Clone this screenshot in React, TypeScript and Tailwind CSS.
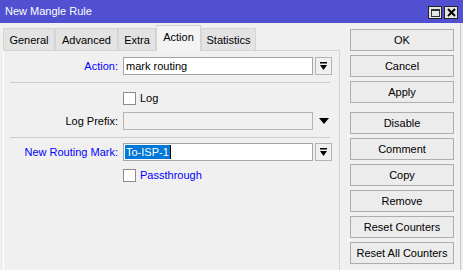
import React from 'react';

const font = { fontFamily: '"Liberation Sans", Arial, sans-serif' };

const DropButton: React.FC = () => (
  <div className="ml-[2px] flex h-[18px] w-[17px] items-center justify-center border border-[#b4b4b4] bg-[#f0f0f0]">
    <svg width="9" height="9" viewBox="0 0 9 9">
      <rect x="1" y="0" width="7" height="1.5" fill="#000" />
      <polygon points="1,3 8,3 4.5,8" fill="#000" />
    </svg>
  </div>
);

const Check: React.FC = () => (
  <div className="h-[13px] w-[13px] border border-[#8c8c8c] bg-white" />
);

const Separator: React.FC<{ mt: string }> = ({ mt }) => (
  <div className={`ml-[6px] h-px w-[320px] bg-[#cdcdcd] ${mt}`} />
);

export default function App() {
  const tabs = [
    { name: 'General', w: 'w-[52px]' },
    { name: 'Advanced', w: 'w-[63px]' },
    { name: 'Extra', w: 'w-[38px]' },
    { name: 'Action', w: 'w-[45px]', active: true },
    { name: 'Statistics', w: 'w-[55px]' },
  ];

  const buttons = [
    { label: 'OK', cls: 'mt-0 border-[#1a1a1a]' },
    { label: 'Cancel', cls: 'mt-[4px]' },
    { label: 'Apply', cls: 'mt-[4px]' },
    { label: 'Disable', cls: 'mt-[9px]' },
    { label: 'Comment', cls: 'mt-[4px]' },
    { label: 'Copy', cls: 'mt-[4px]' },
    { label: 'Remove', cls: 'mt-[4px]' },
    { label: 'Reset Counters', cls: 'mt-[4px]' },
    { label: 'Reset All Counters', cls: 'mt-[4px]' },
  ];

  return (
    <div className="flex h-[270px] w-[463px] flex-col overflow-hidden bg-[#f0f0f0] text-[11px] leading-[13px] text-black" style={font}>
      {/* title bar */}
      <div className="flex h-[23px] items-center bg-[#5050d0] pl-[5px] pr-[5px]">
        <span className="flex-1 text-[11px] text-white">New Mangle Rule</span>
        <div className="mt-[2px] flex gap-[2px]">
          <div className="flex h-[13px] w-[14px] items-center justify-center border border-[#222] bg-[#e6e6e6]">
            <div className="h-[8px] w-[9px] border border-t-2 border-[#333]" />
          </div>
          <div className="flex h-[13px] w-[14px] items-center justify-center border border-[#222] bg-[#e6e6e6]">
            <svg width="9" height="9" viewBox="0 0 9 9">
              <path d="M1 1 L8 8 M8 1 L1 8" stroke="#000" strokeWidth="2" />
            </svg>
          </div>
        </div>
      </div>

      <div className="flex flex-1">
        {/* left: tabs and panel */}
        <div className="flex w-[340px] flex-col pl-[3px]">
          <div className="flex h-[27px] items-end">
            {tabs.map((t) =>
              t.active ? (
                <div
                  key={t.name}
                  className={`${t.w} -mb-px z-10 flex h-[26px] items-center justify-center border border-b-0 border-[#d4d4d4] bg-[#f3f3f3] pb-[2px]`}
                >
                  {t.name}
                </div>
              ) : (
                <div
                  key={t.name}
                  className={`${t.w} flex h-[22px] items-center justify-center border border-b-0 border-[#d4d4d4] bg-[#e3e3e3] pt-px`}
                >
                  {t.name}
                </div>
              )
            )}
          </div>
          <div className="flex flex-1 flex-col border-l border-r border-t border-l-white border-r-[#d4d4d4] border-t-[#d4d4d4] bg-[#f0f0f0]">
            {/* Action */}
            <div className="mt-[6px] flex h-[18px] items-center">
              <div className="w-[114px] text-right text-[#0000ff]">Action:</div>
              <div className="ml-[5px] flex h-[18px] w-[190px] items-center border border-[#a5a5a5] bg-white pl-[2px]">
                mark routing
              </div>
              <DropButton />
            </div>
            <Separator mt="mt-[7px]" />
            {/* Log */}
            <div className="mt-[9px] flex h-[13px] items-center">
              <div className="ml-[119px]">
                <Check />
              </div>
              <span className="ml-[4px]">Log</span>
            </div>
            <div className="mt-[7px] flex h-[18px] items-center">
              <div className="w-[114px] text-right">Log Prefix:</div>
              <div className="ml-[5px] h-[18px] w-[190px] border border-[#b4b4b4] bg-[#f0f0f0]" />
              <svg className="ml-[6px]" width="10" height="6" viewBox="0 0 10 6">
                <polygon points="0,0 10,0 5,6" fill="#000" />
              </svg>
            </div>
            <Separator mt="mt-[7px]" />
            {/* New Routing Mark */}
            <div className="mt-[5px] flex h-[18px] items-center">
              <div className="w-[114px] text-right text-[#0000ff]">New Routing Mark:</div>
              <div className="ml-[5px] flex h-[18px] w-[190px] items-center border border-[#a5a5a5] bg-white pl-[1px]">
                <span className="bg-[#0078d7] px-px leading-[14px] text-white">To-ISP-1</span>
                <span className="h-[14px] w-px bg-black" />
              </div>
              <DropButton />
            </div>
            <div className="mt-[8px] flex h-[13px] items-center">
              <div className="ml-[119px]">
                <Check />
              </div>
              <span className="ml-[4px] text-[#0000ff]">Passthrough</span>
            </div>
          </div>
        </div>

        {/* right: buttons */}
        <div className="ml-[10px] flex w-[104px] flex-col pt-[6px]">
          {buttons.map((b) => (
            <div
              key={b.label}
              className={`flex h-[22px] items-center justify-center border border-[#adadad] bg-[#ececec] ${b.cls}`}
            >
              {b.label}
            </div>
          ))}
        </div>
        <div className="ml-[6px] w-px bg-[#c8c8c8]" />
      </div>
    </div>
  );
}
